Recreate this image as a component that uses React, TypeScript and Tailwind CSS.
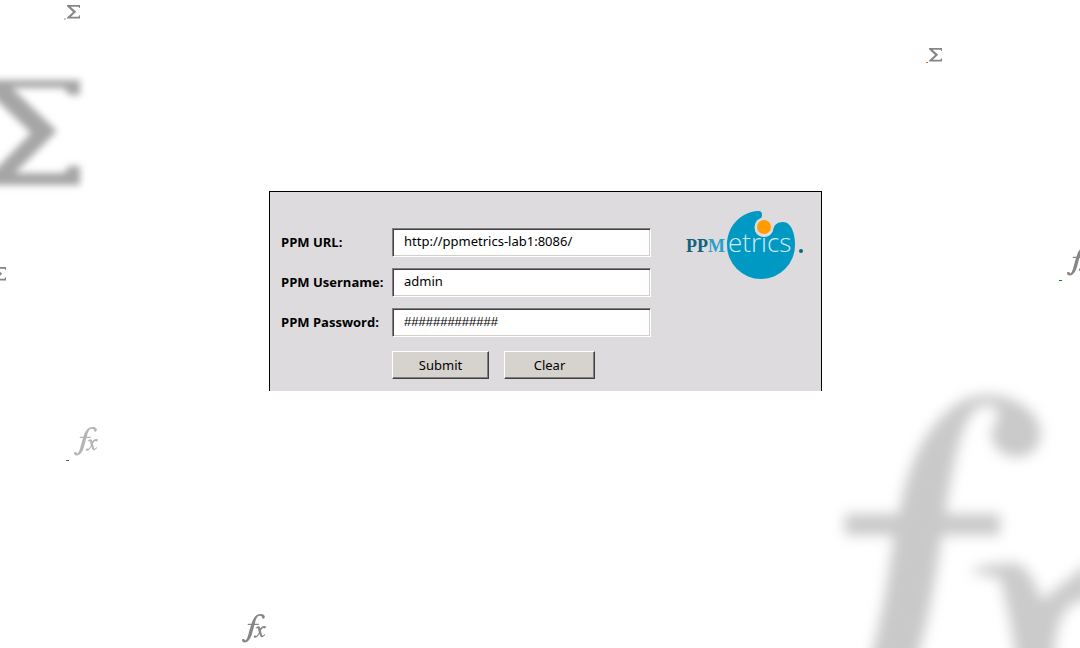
import { useState } from "react";
import type { FormEvent } from "react";

type FieldProps = {
  id: string;
  label: string;
  value: string;
  font?: string;
  onChange: (value: string) => void;
};

function Field({ id, label, value, font = "font-['Noto_Sans',sans-serif]", onChange }: FieldProps) {
  return (
    <>
      <label htmlFor={id} className="font-['Open_Sans',sans-serif] text-[13px] font-bold text-black">
        {label}
      </label>
      <input
        id={id}
        type="text"
        value={value}
        onChange={(event) => onChange(event.target.value)}
        className={`h-[29px] w-full border border-t-[#808080] border-r-white border-b-white border-l-[#808080] bg-white pr-2 pb-[3px] pl-[11px] text-[13px] text-black shadow-[inset_1px_1px_0_#404040,inset_-1px_-1px_0_#d4d0c8] outline-none ${font}`}
      />
    </>
  );
}

const buttonClass =
  "h-[28px] border border-t-white border-r-[#404040] border-b-[#404040] border-l-white bg-[#d6d3ce] pt-[2px] font-['Noto_Sans',sans-serif] text-[13px] text-black shadow-[inset_-1px_-1px_0_#808080]";

function Logo() {
  return (
    <svg viewBox="0 0 120 72" className="h-[72px] w-[120px]" role="img" aria-label="PPMetrics">
      <path
        d="M72 2C54 3 41 18 41 36A34 34 0 0 0 109 36C109 24 105 13 97 13C91 13 88 16 87 21C86 25 83 28 78 28C72 28 68 23 69 18C70 12 76 11 76 6C76 3 75 2 72 2Z"
        fill="#0099c4"
      />
      <circle cx="78" cy="18" r="9.5" fill="#dedbde" />
      <circle cx="78" cy="18" r="7" fill="#ff9c00" />
      <text x="0" y="43" className="font-['Liberation_Serif',serif] text-[18px] font-bold">
        <tspan fill="#12637c">PP</tspan>
        <tspan fill="#2a9fc8">M</tspan>
      </text>
      <text x="42" y="43" fill="#d5eaf1" className="font-['Open_Sans',sans-serif] text-[26px] font-light">
        etrics
      </text>
      <circle cx="115" cy="42" r="2" fill="#086681" />
    </svg>
  );
}

function Backdrop() {
  return (
    <svg
      aria-hidden="true"
      viewBox="0 0 1080 648"
      preserveAspectRatio="xMidYMid slice"
      className="pointer-events-none absolute inset-0 h-full w-full"
    >
      <defs>
        <filter id="soft" x="-20%" y="-20%" width="140%" height="140%">
          <feGaussianBlur stdDeviation="3.5" />
        </filter>
        <filter id="softer" x="-20%" y="-20%" width="140%" height="140%">
          <feGaussianBlur stdDeviation="6.5" />
        </filter>
        <path id="sigma" d="M0 0H13V3H12.3L11.5 1.7H3.6L9.2 6.8L3.8 11.7H11.5L12.3 10.2H13V13.5H0V12.4L6 7L0 1.2Z" />
        <g id="fx">
          <path d="M0 26C0 24.500 3 24.500 3 26.500C5 26 6 22 7 18L9 11H5.500L6 9.800H9.500C11 4 14 0 18.500 0C22 0 23.500 2 22.500 4C21.500 5.500 19.500 4.500 20 2.500C16 0 14 4 12.800 9.800H17L16.600 11H12.400L10.500 18C9 24 6.500 28.500 2.500 28.500C1 28.500 0 27.500 0 26Z" />
          <path d="M13.500 14C16 11.500 18 12 18.500 14.500C20 12 22 11.500 23.800 12.500C24.500 14 22.500 15 21.500 14C20.500 14 19.300 15.500 18.900 16.800L20 21C20.500 22.500 21.500 21.500 22.500 20L23.200 20.500C21.500 23.500 19 24.500 18 21.500L17.300 19.500C16 22.500 14 24.500 12 23.500C11 22 13 21 14 22C15 21.500 16.500 19.500 16.900 18.200L16 14.800C15.500 13.500 14.800 13.800 14 14.600Z" />
        </g>
      </defs>

      <g fill="#868686">
        <use href="#sigma" x="67" y="5" />
        <use href="#sigma" x="929" y="48" />
        <use href="#sigma" x="-7" y="267" />
        <use href="#fx" x="242" y="614" />
        <use href="#fx" x="1067" y="247" />
      </g>
      <use href="#fx" x="74" y="427" fill="#b5b5b5" />

      <path d="M64 19h2" stroke="#a9896f" />
      <path d="M926 62.500h2" stroke="#e07030" />
      <path d="M66 460.500h1" stroke="#d03030" />
      <path d="M67 460.500h2" stroke="#5050c0" />
      <path d="M1059 280.500h3" stroke="#108010" />

      <path
        filter="url(#soft)"
        d="M-20 80H80V95H69L64 88H12L57 131L15 173H64L69 166H80V185H-20V170L-4 169L31 133L-20 84Z"
        fill="#a6a6a6"
      />

      <g filter="url(#softer)">
        <path
          d="M865 680C882 620 889 575 894 535H845V514H899C906 475 919 432 955 405C980 388 1014 393 1034 415C1049 437 1036 457 1017 457C997 457 985 438 996 422C1004 408 990 401 977 408C960 422 953 468 945 514H1000V535H942C935 580 928 630 910 680Z"
          fill="#c9c9c9"
        />
        <path d="M970 572C985 562 1006 564 1018 563C1031 571 1036 586 1042 600L1090 562V599C1062 601 1054 622 1053 680H1017C1016 640 1006 602 1000 578Z" fill="#cbcbcb" />
      </g>
    </svg>
  );
}

export default function App() {
  const [url, setUrl] = useState("http://ppmetrics-lab1:8086/");
  const [username, setUsername] = useState("admin");
  const [password, setPassword] = useState("#############");

  const clear = () => {
    setUrl("");
    setUsername("");
    setPassword("");
  };

  return (
    <div className="relative min-h-screen bg-white pt-[191px] pl-[11px]">
      <Backdrop />
      <main className="relative mx-auto flex w-full max-w-[553px] items-start justify-between border border-b-0 border-black bg-[#dedbde] pr-[15px] pb-[12px] pl-[11px]">
        <form
          onSubmit={(event: FormEvent) => event.preventDefault()}
          className="grid grid-cols-[111px_259px] items-center gap-y-[11px] pt-[36px]"
        >
          <Field id="ppm-url" label="PPM URL:" value={url} onChange={setUrl} />
          <Field id="ppm-username" label="PPM Username:" value={username} onChange={setUsername} />
          <Field
            id="ppm-password"
            label="PPM Password:"
            value={password}
            font="font-['Liberation_Sans',sans-serif]"
            onChange={setPassword}
          />
          <div className="col-start-2 flex gap-[15px] pt-[3px]">
            <button type="submit" className={`${buttonClass} w-[97px]`}>
              Submit
            </button>
            <button type="button" onClick={clear} className={`${buttonClass} w-[91px]`}>
              Clear
            </button>
          </div>
        </form>
        <div className="pt-[17px]">
          <Logo />
        </div>
      </main>
    </div>
  );
}
